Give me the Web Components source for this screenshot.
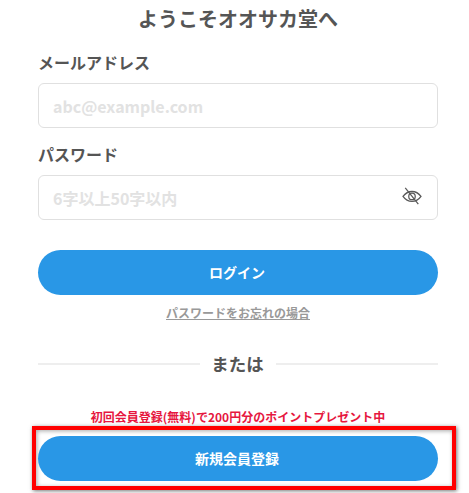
<!DOCTYPE html>
<html lang="ja">
<head>
<meta charset="utf-8">
<title>ログイン</title>
<style>
  html, body { margin: 0; padding: 0; background: #fff; overflow: hidden; }
  body { font-family: "Noto Sans CJK JP", "Noto Sans", sans-serif; }
</style>
</head>
<body>
<login-panel>
  <form-field label="メールアドレス" placeholder="abc@example.com"></form-field>
  <form-field label="パスワード" placeholder="6字以上50字以内" secret></form-field>
</login-panel>

<script>
class FormField extends HTMLElement {
  connectedCallback() {
    const eye = this.hasAttribute('secret') ? `
      <svg viewBox="0 0 22 20" width="20" height="18" fill="none" stroke="#5a5a5a" stroke-width="1.4">
        <path d="M1 10.500C3.500 7 7 5 11 5s7.500 2 10 5.500C18.500 14 15 16 11 16S3.500 14 1 10.500Z"/>
        <circle cx="11" cy="10.500" r="3.600"/>
        <path d="M3.500 1L18 19"/>
      </svg>` : '';
    this.attachShadow({ mode: 'open' }).innerHTML = `
      <style>
        :host { display: block; }
        label {
          display: block;
          height: 24px;
          line-height: 24px;
          font-size: 16px;
          font-weight: 700;
          color: #555;
          margin-bottom: 9px;
        }
        .box {
          box-sizing: border-box;
          height: 45px;
          border: 1px solid #e0e0e0;
          border-radius: 6px;
          padding: 0 15px 0 14px;
          display: flex;
          align-items: center;
          justify-content: space-between;
        }
        .ph { font-size: 16px; font-weight: 700; color: #e2e2e2; }
        svg { display: block; margin-bottom: 3px; }
      </style>
      <label>${this.getAttribute('label')}</label>
      <div class="box"><span class="ph">${this.getAttribute('placeholder')}</span>${eye}</div>
    `;
  }
}
customElements.define('form-field', FormField);

class PillButton extends HTMLElement {
  constructor() {
    super();
    this.attachShadow({ mode: 'open' }).innerHTML = `
      <style>
        :host {
          display: flex;
          box-sizing: border-box;
          width: 400px;
          height: 45px;
          padding: 0 2px 2px 0;
          align-items: center;
          justify-content: center;
          border-radius: 23px;
          background: #2997e6;
          color: #fff;
          font-size: 14px;
          font-weight: 700;
        }
      </style>
      <slot></slot>
    `;
  }
}
customElements.define('pill-button', PillButton);

class LoginPanel extends HTMLElement {
  constructor() {
    super();
    this.attachShadow({ mode: 'open' }).innerHTML = `
      <style>
        :host {
          display: block;
          box-sizing: border-box;
          width: 469px;
          height: 493px;
          padding: 0 31px 0 38px;
          font-family: "Noto Sans CJK JP", "Noto Sans", sans-serif;
        }
        h1 {
          margin: 0;
          height: 36px;
          line-height: 38px;
          font-size: 20px;
          font-weight: 700;
          text-align: center;
          color: #555;
        }
        .fields { display: flex; flex-direction: column; gap: 14px; margin-top: 14px; }
        pill-button.login { margin-top: 30px; }
        .forgot {
          display: block;
          margin-top: 9px;
          text-align: center;
          font-size: 12px;
          font-weight: 700;
          line-height: 18px;
          color: #999;
          text-decoration: underline;
        }
        .divider {
          display: flex;
          align-items: center;
          gap: 11px;
          margin-top: 28px;
          height: 26px;
          font-size: 17.500px;
          font-weight: 700;
          color: #555;
        }
        .divider i { flex: 1; height: 2px; margin-top: 2px; background: #eee; }
        .divider span { padding-right: 1px; }
        .promo {
          margin-top: 32px;
          text-align: center;
          font-size: 12px;
          font-weight: 700;
          line-height: 18px;
          color: #e6173f;
        }
        .highlight {
          box-sizing: border-box;
          width: 424px;
          height: 64px;
          margin: 0 0 0 -6px;
          padding: 6px 0 0 2px;
          border: 4px solid #f00;
          box-shadow: 1px 1px 4px rgba(0,0,0,.55), inset 1px 1px 4px rgba(0,0,0,.35);
        }
      </style>
      <h1>ようこそオオサカ堂へ</h1>
      <div class="fields"><slot></slot></div>
      <pill-button class="login">ログイン</pill-button>
      <a class="forgot">パスワードをお忘れの場合</a>
      <div class="divider"><i></i><span>または</span><i></i></div>
      <div class="promo">初回会員登録(無料)で200円分のポイントプレゼント中</div>
      <div class="highlight"><pill-button>新規会員登録</pill-button></div>
    `;
  }
}
customElements.define('login-panel', LoginPanel);
</script>
</body>
</html>
